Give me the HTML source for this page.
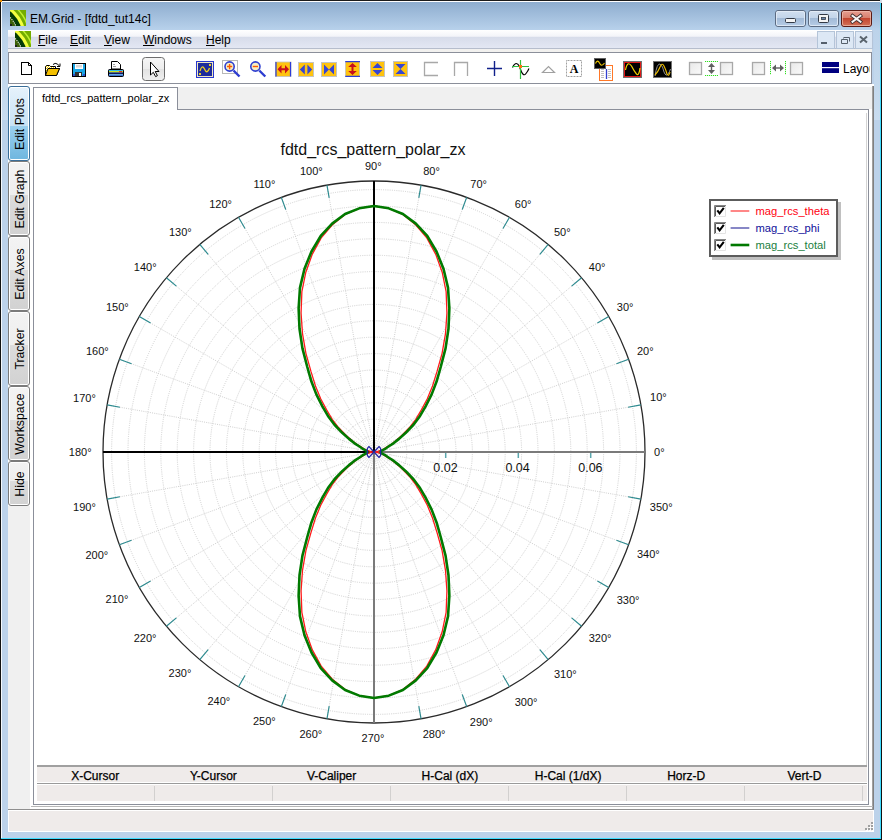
<!DOCTYPE html>
<html><head><meta charset="utf-8">
<style>
*{box-sizing:border-box;margin:0;padding:0}
html,body{width:882px;height:840px;overflow:hidden;background:#bcd2ea;font-family:"Liberation Sans",sans-serif;color:#000}
.a{position:absolute}
.lbl{position:absolute;width:60px;text-align:center;font-size:11px;line-height:12px;color:#111;white-space:nowrap}
.vl{font-size:12.5px;line-height:13px}
.menu{position:absolute;top:33px;font-size:12px;line-height:14px;color:#000}
.menu u{text-decoration:underline;text-underline-offset:1px;text-decoration-thickness:1px}
.tab{position:absolute;left:8px;width:22px;border:1px solid #7b7b7b;border-radius:3px;background:linear-gradient(180deg,#f3f3f3 0,#eeeeee 45%,#dcdcdc 45%,#d2d2d2 100%);box-shadow:inset 0 0 0 1px #fff}
.tab span{position:absolute;left:50%;top:50%;transform:translate(-50%,-50%) translate(1px,0) rotate(-90deg);font-size:12.3px;line-height:12px;white-space:nowrap}
.hdr{position:absolute;top:770px;font-size:12px;line-height:12px;text-align:center;width:118px;-webkit-text-stroke:0.25px #000}
</style></head><body>

<div class="a" style="left:0;top:0;width:882px;height:1px;background:#1b1b1b"></div>
<div class="a" style="left:0;top:0;width:1px;height:840px;background:#111"></div>
<div class="a" style="left:881px;top:0;width:1px;height:840px;background:#111"></div>
<div class="a" style="left:0;top:839px;width:882px;height:1px;background:#111"></div>
<div class="a" style="left:880px;top:1px;width:1px;height:838px;background:#3fdcff"></div>
<div class="a" style="left:1px;top:838px;width:880px;height:1px;background:#3fdcff"></div>
<div class="a" style="left:1px;top:1px;width:879px;height:1px;background:#fff"></div>
<div class="a" style="left:1px;top:1px;width:1px;height:837px;background:#f4f8fc"></div>
<div class="a" style="left:2px;top:2px;width:878px;height:28px;background:linear-gradient(#8eadcf,#b8d1eb)"></div>
<div class="a" style="left:2px;top:30px;width:6px;height:90px;background:linear-gradient(#bcd3ea,#c9dcef)"></div>
<div class="a" style="left:874px;top:30px;width:6px;height:90px;background:linear-gradient(#bcd3ea,#c9dcef)"></div>

<div class="a" style="left:30px;top:11px;font-size:12px;line-height:16px;color:#000">EM.Grid - [fdtd_tut14c]</div>
<div class="a" style="left:8px;top:30px;width:864px;height:18px;background:linear-gradient(#ffffff 0,#f3f4f9 35%,#d7dcea 40%,#e3e7f3 100%)"></div>
<div class="a" style="left:8px;top:48px;width:864px;height:1px;background:#b6bdcc"></div>
<div class="a" style="left:8px;top:49px;width:864px;height:3px;background:#f2f1ef"></div>

<div class="menu" style="left:38px"><u>F</u>ile</div><div class="menu" style="left:70px"><u>E</u>dit</div><div class="menu" style="left:104px"><u>V</u>iew</div><div class="menu" style="left:143px"><u>W</u>indows</div><div class="menu" style="left:206px"><u>H</u>elp</div>
<div class="a" style="left:8px;top:52px;width:864px;height:32px;border:1px solid #8b8f9a;background:#fff"></div>
<div class="a" style="left:8px;top:84px;width:866px;height:726px;background:#fff"></div>
<div class="a" style="left:8px;top:506px;width:22px;height:303px;background:#f0f0f0"></div>

<div class="tab" style="top:86px;height:75px;border-color:#3a6e99;background:linear-gradient(180deg,#e6f2fb 0,#c8e2f5 53%,#9bd0ef 53%,#6fb6df 100%)"><span>Edit Plots</span></div>
<div class="tab" style="top:161px;height:75px"><span>Edit Graph</span></div>
<div class="tab" style="top:236px;height:75px"><span>Edit Axes</span></div>
<div class="tab" style="top:311px;height:75px"><span>Tracker</span></div>
<div class="tab" style="top:386px;height:75px"><span>Workspace</span></div>
<div class="tab" style="top:461px;height:45px"><span>Hide</span></div>
<div class="a" style="left:33px;top:87px;width:145px;height:23px;border:1px solid #8b8f9a;border-bottom:none;background:#fff"></div>
<div class="a" style="left:42px;top:92px;font-size:11px;line-height:13px">fdtd_rcs_pattern_polar_zx</div>
<div class="a" style="left:178px;top:87px;width:694px;height:22px;background:#f0f0f0"></div>
<div class="a" style="left:177px;top:109px;width:692px;height:1px;background:#8b8f9a"></div>
<div class="a" style="left:33px;top:109px;width:1px;height:696px;background:#8b8f9a"></div>
<div class="a" style="left:868px;top:109px;width:1px;height:696px;background:#8b8f9a"></div>
<div class="a" style="left:33px;top:804px;width:836px;height:1px;background:#8b8f9a"></div>
<div class="a" style="left:866px;top:113px;width:1px;height:652px;background:#d4d4d4"></div>
<div class="a" style="left:872px;top:86px;width:2px;height:724px;background:linear-gradient(90deg,#b0b0b0,#707070)"></div>
<div class="a" style="left:31px;top:806px;width:842px;height:1px;background:#b8b8b8"></div>
<div class="a" style="left:8px;top:809px;width:866px;height:1px;background:#8f8f8f"></div>

<div class="a" style="left:37px;top:765px;width:830px;height:2px;background:#a0a0a0"></div>
<div class="a" style="left:37px;top:767px;width:830px;height:15px;background:#efebea"></div>
<div class="a" style="left:37px;top:783px;width:830px;height:1px;background:#9a9a9a"></div>
<div class="a" style="left:37px;top:785px;width:830px;height:16px;background:#efebea"></div>

<div class="hdr" style="left:36.2px">X-Cursor</div>
<div class="a" style="left:154px;top:786px;width:1px;height:15px;background:#d2d0cf"></div>
<div class="hdr" style="left:154.4px">Y-Cursor</div>
<div class="a" style="left:272px;top:786px;width:1px;height:15px;background:#d2d0cf"></div>
<div class="hdr" style="left:272.6px">V-Caliper</div>
<div class="a" style="left:390px;top:786px;width:1px;height:15px;background:#d2d0cf"></div>
<div class="hdr" style="left:390.9px">H-Cal (dX)</div>
<div class="a" style="left:508px;top:786px;width:1px;height:15px;background:#d2d0cf"></div>
<div class="hdr" style="left:509.1px">H-Cal (1/dX)</div>
<div class="a" style="left:626px;top:786px;width:1px;height:15px;background:#d2d0cf"></div>
<div class="hdr" style="left:627.2px">Horz-D</div>
<div class="a" style="left:744px;top:786px;width:1px;height:15px;background:#d2d0cf"></div>
<div class="hdr" style="left:745.5px">Vert-D</div>
<div class="a" style="left:862px;top:786px;width:1px;height:15px;background:#d2d0cf"></div>
<div class="a" style="left:8px;top:810px;width:866px;height:22px;background:#efebea;border:1px solid #fff"></div>
<svg class="a" style="left:0;top:0" width="882" height="840" viewBox="0 0 882 840">
<circle cx="374.0" cy="452.0" r="16.40" fill="none" stroke="#d0d0d0" stroke-width="1" stroke-dasharray="1 1.2"/>
<circle cx="374.0" cy="452.0" r="32.80" fill="none" stroke="#d0d0d0" stroke-width="1" stroke-dasharray="1 1.2"/>
<circle cx="374.0" cy="452.0" r="49.20" fill="none" stroke="#d0d0d0" stroke-width="1" stroke-dasharray="1 1.2"/>
<circle cx="374.0" cy="452.0" r="65.60" fill="none" stroke="#d0d0d0" stroke-width="1" stroke-dasharray="1 1.2"/>
<circle cx="374.0" cy="452.0" r="82.00" fill="none" stroke="#d0d0d0" stroke-width="1" stroke-dasharray="1 1.2"/>
<circle cx="374.0" cy="452.0" r="98.40" fill="none" stroke="#d0d0d0" stroke-width="1" stroke-dasharray="1 1.2"/>
<circle cx="374.0" cy="452.0" r="114.80" fill="none" stroke="#d0d0d0" stroke-width="1" stroke-dasharray="1 1.2"/>
<circle cx="374.0" cy="452.0" r="131.20" fill="none" stroke="#d0d0d0" stroke-width="1" stroke-dasharray="1 1.2"/>
<circle cx="374.0" cy="452.0" r="147.60" fill="none" stroke="#d0d0d0" stroke-width="1" stroke-dasharray="1 1.2"/>
<circle cx="374.0" cy="452.0" r="164.00" fill="none" stroke="#d0d0d0" stroke-width="1" stroke-dasharray="1 1.2"/>
<circle cx="374.0" cy="452.0" r="180.40" fill="none" stroke="#d0d0d0" stroke-width="1" stroke-dasharray="1 1.2"/>
<circle cx="374.0" cy="452.0" r="196.80" fill="none" stroke="#d0d0d0" stroke-width="1" stroke-dasharray="1 1.2"/>
<circle cx="374.0" cy="452.0" r="213.20" fill="none" stroke="#d0d0d0" stroke-width="1" stroke-dasharray="1 1.2"/>
<circle cx="374.0" cy="452.0" r="229.60" fill="none" stroke="#d0d0d0" stroke-width="1" stroke-dasharray="1 1.2"/>
<circle cx="374.0" cy="452.0" r="246.00" fill="none" stroke="#d0d0d0" stroke-width="1" stroke-dasharray="1 1.2"/>
<circle cx="374.0" cy="452.0" r="262.40" fill="none" stroke="#d0d0d0" stroke-width="1" stroke-dasharray="1 1.2"/>
<line x1="374.0" y1="452.0" x2="640.88" y2="404.94" stroke="#d0d0d0" stroke-width="1" stroke-dasharray="1 1.2"/>
<line x1="374.0" y1="452.0" x2="628.66" y2="359.31" stroke="#d0d0d0" stroke-width="1" stroke-dasharray="1 1.2"/>
<line x1="374.0" y1="452.0" x2="608.69" y2="316.50" stroke="#d0d0d0" stroke-width="1" stroke-dasharray="1 1.2"/>
<line x1="374.0" y1="452.0" x2="581.60" y2="277.80" stroke="#d0d0d0" stroke-width="1" stroke-dasharray="1 1.2"/>
<line x1="374.0" y1="452.0" x2="548.20" y2="244.40" stroke="#d0d0d0" stroke-width="1" stroke-dasharray="1 1.2"/>
<line x1="374.0" y1="452.0" x2="509.50" y2="217.31" stroke="#d0d0d0" stroke-width="1" stroke-dasharray="1 1.2"/>
<line x1="374.0" y1="452.0" x2="466.69" y2="197.34" stroke="#d0d0d0" stroke-width="1" stroke-dasharray="1 1.2"/>
<line x1="374.0" y1="452.0" x2="421.06" y2="185.12" stroke="#d0d0d0" stroke-width="1" stroke-dasharray="1 1.2"/>
<line x1="374.0" y1="452.0" x2="326.94" y2="185.12" stroke="#d0d0d0" stroke-width="1" stroke-dasharray="1 1.2"/>
<line x1="374.0" y1="452.0" x2="281.31" y2="197.34" stroke="#d0d0d0" stroke-width="1" stroke-dasharray="1 1.2"/>
<line x1="374.0" y1="452.0" x2="238.50" y2="217.31" stroke="#d0d0d0" stroke-width="1" stroke-dasharray="1 1.2"/>
<line x1="374.0" y1="452.0" x2="199.80" y2="244.40" stroke="#d0d0d0" stroke-width="1" stroke-dasharray="1 1.2"/>
<line x1="374.0" y1="452.0" x2="166.40" y2="277.80" stroke="#d0d0d0" stroke-width="1" stroke-dasharray="1 1.2"/>
<line x1="374.0" y1="452.0" x2="139.31" y2="316.50" stroke="#d0d0d0" stroke-width="1" stroke-dasharray="1 1.2"/>
<line x1="374.0" y1="452.0" x2="119.34" y2="359.31" stroke="#d0d0d0" stroke-width="1" stroke-dasharray="1 1.2"/>
<line x1="374.0" y1="452.0" x2="107.12" y2="404.94" stroke="#d0d0d0" stroke-width="1" stroke-dasharray="1 1.2"/>
<line x1="374.0" y1="452.0" x2="107.12" y2="499.06" stroke="#d0d0d0" stroke-width="1" stroke-dasharray="1 1.2"/>
<line x1="374.0" y1="452.0" x2="119.34" y2="544.69" stroke="#d0d0d0" stroke-width="1" stroke-dasharray="1 1.2"/>
<line x1="374.0" y1="452.0" x2="139.31" y2="587.50" stroke="#d0d0d0" stroke-width="1" stroke-dasharray="1 1.2"/>
<line x1="374.0" y1="452.0" x2="166.40" y2="626.20" stroke="#d0d0d0" stroke-width="1" stroke-dasharray="1 1.2"/>
<line x1="374.0" y1="452.0" x2="199.80" y2="659.60" stroke="#d0d0d0" stroke-width="1" stroke-dasharray="1 1.2"/>
<line x1="374.0" y1="452.0" x2="238.50" y2="686.69" stroke="#d0d0d0" stroke-width="1" stroke-dasharray="1 1.2"/>
<line x1="374.0" y1="452.0" x2="281.31" y2="706.66" stroke="#d0d0d0" stroke-width="1" stroke-dasharray="1 1.2"/>
<line x1="374.0" y1="452.0" x2="326.94" y2="718.88" stroke="#d0d0d0" stroke-width="1" stroke-dasharray="1 1.2"/>
<line x1="374.0" y1="452.0" x2="421.06" y2="718.88" stroke="#d0d0d0" stroke-width="1" stroke-dasharray="1 1.2"/>
<line x1="374.0" y1="452.0" x2="466.69" y2="706.66" stroke="#d0d0d0" stroke-width="1" stroke-dasharray="1 1.2"/>
<line x1="374.0" y1="452.0" x2="509.50" y2="686.69" stroke="#d0d0d0" stroke-width="1" stroke-dasharray="1 1.2"/>
<line x1="374.0" y1="452.0" x2="548.20" y2="659.60" stroke="#d0d0d0" stroke-width="1" stroke-dasharray="1 1.2"/>
<line x1="374.0" y1="452.0" x2="581.60" y2="626.20" stroke="#d0d0d0" stroke-width="1" stroke-dasharray="1 1.2"/>
<line x1="374.0" y1="452.0" x2="608.69" y2="587.50" stroke="#d0d0d0" stroke-width="1" stroke-dasharray="1 1.2"/>
<line x1="374.0" y1="452.0" x2="628.66" y2="544.69" stroke="#d0d0d0" stroke-width="1" stroke-dasharray="1 1.2"/>
<line x1="374.0" y1="452.0" x2="640.88" y2="499.06" stroke="#d0d0d0" stroke-width="1" stroke-dasharray="1 1.2"/>
<circle cx="374.0" cy="452.0" r="271.0" fill="none" stroke="#2a2a2a" stroke-width="1.3"/>
<line x1="628.08" y1="407.20" x2="640.88" y2="404.94" stroke="#2b8a8f" stroke-width="1.15"/>
<line x1="616.44" y1="363.76" x2="628.66" y2="359.31" stroke="#2b8a8f" stroke-width="1.15"/>
<line x1="597.43" y1="323.00" x2="608.69" y2="316.50" stroke="#2b8a8f" stroke-width="1.15"/>
<line x1="571.64" y1="286.16" x2="581.60" y2="277.80" stroke="#2b8a8f" stroke-width="1.15"/>
<line x1="539.84" y1="254.36" x2="548.20" y2="244.40" stroke="#2b8a8f" stroke-width="1.15"/>
<line x1="503.00" y1="228.57" x2="509.50" y2="217.31" stroke="#2b8a8f" stroke-width="1.15"/>
<line x1="462.24" y1="209.56" x2="466.69" y2="197.34" stroke="#2b8a8f" stroke-width="1.15"/>
<line x1="418.80" y1="197.92" x2="421.06" y2="185.12" stroke="#2b8a8f" stroke-width="1.15"/>
<line x1="329.20" y1="197.92" x2="326.94" y2="185.12" stroke="#2b8a8f" stroke-width="1.15"/>
<line x1="285.76" y1="209.56" x2="281.31" y2="197.34" stroke="#2b8a8f" stroke-width="1.15"/>
<line x1="245.00" y1="228.57" x2="238.50" y2="217.31" stroke="#2b8a8f" stroke-width="1.15"/>
<line x1="208.16" y1="254.36" x2="199.80" y2="244.40" stroke="#2b8a8f" stroke-width="1.15"/>
<line x1="176.36" y1="286.16" x2="166.40" y2="277.80" stroke="#2b8a8f" stroke-width="1.15"/>
<line x1="150.57" y1="323.00" x2="139.31" y2="316.50" stroke="#2b8a8f" stroke-width="1.15"/>
<line x1="131.56" y1="363.76" x2="119.34" y2="359.31" stroke="#2b8a8f" stroke-width="1.15"/>
<line x1="119.92" y1="407.20" x2="107.12" y2="404.94" stroke="#2b8a8f" stroke-width="1.15"/>
<line x1="119.92" y1="496.80" x2="107.12" y2="499.06" stroke="#2b8a8f" stroke-width="1.15"/>
<line x1="131.56" y1="540.24" x2="119.34" y2="544.69" stroke="#2b8a8f" stroke-width="1.15"/>
<line x1="150.57" y1="581.00" x2="139.31" y2="587.50" stroke="#2b8a8f" stroke-width="1.15"/>
<line x1="176.36" y1="617.84" x2="166.40" y2="626.20" stroke="#2b8a8f" stroke-width="1.15"/>
<line x1="208.16" y1="649.64" x2="199.80" y2="659.60" stroke="#2b8a8f" stroke-width="1.15"/>
<line x1="245.00" y1="675.43" x2="238.50" y2="686.69" stroke="#2b8a8f" stroke-width="1.15"/>
<line x1="285.76" y1="694.44" x2="281.31" y2="706.66" stroke="#2b8a8f" stroke-width="1.15"/>
<line x1="329.20" y1="706.08" x2="326.94" y2="718.88" stroke="#2b8a8f" stroke-width="1.15"/>
<line x1="418.80" y1="706.08" x2="421.06" y2="718.88" stroke="#2b8a8f" stroke-width="1.15"/>
<line x1="462.24" y1="694.44" x2="466.69" y2="706.66" stroke="#2b8a8f" stroke-width="1.15"/>
<line x1="503.00" y1="675.43" x2="509.50" y2="686.69" stroke="#2b8a8f" stroke-width="1.15"/>
<line x1="539.84" y1="649.64" x2="548.20" y2="659.60" stroke="#2b8a8f" stroke-width="1.15"/>
<line x1="571.64" y1="617.84" x2="581.60" y2="626.20" stroke="#2b8a8f" stroke-width="1.15"/>
<line x1="597.43" y1="581.00" x2="608.69" y2="587.50" stroke="#2b8a8f" stroke-width="1.15"/>
<line x1="616.44" y1="540.24" x2="628.66" y2="544.69" stroke="#2b8a8f" stroke-width="1.15"/>
<line x1="628.08" y1="496.80" x2="640.88" y2="499.06" stroke="#2b8a8f" stroke-width="1.15"/>
<line x1="374.0" y1="452.0" x2="374.0" y2="181.0" stroke="#000" stroke-width="2"/>
<line x1="374.0" y1="452.0" x2="103.0" y2="452.0" stroke="#000" stroke-width="2"/>
<line x1="374.0" y1="452.0" x2="645.0" y2="452.0" stroke="#7a7a7a" stroke-width="2"/>
<line x1="374.0" y1="452.0" x2="374.0" y2="723.0" stroke="#7a7a7a" stroke-width="2"/>
<line x1="445.7" y1="453" x2="445.7" y2="458" stroke="#5aa6ad" stroke-width="1.5"/>
<line x1="518.3" y1="453" x2="518.3" y2="458" stroke="#5aa6ad" stroke-width="1.5"/>
<line x1="590.7" y1="453" x2="590.7" y2="458" stroke="#5aa6ad" stroke-width="1.5"/>
<path d="M374.00,206.00 L359.27,208.47 L345.16,214.45 L332.35,224.72 L321.21,237.83 L312.34,254.12 L305.82,272.24 L301.87,291.74 L301.07,313.04 L302.50,333.72 L305.91,353.36 L311.03,371.63 L315.48,385.95 L320.68,398.68 L326.76,410.15 L332.25,419.29 L338.53,427.52 L345.73,434.91 L351.93,440.41 L356.69,444.21 L361.71,447.34 L364.25,448.96 L366.84,450.23 L369.49,451.17 L371.07,451.64 L372.53,451.91 L374.00,452.00 L372.53,452.09 L371.07,452.36 L369.49,452.83 L366.84,453.77 L364.25,455.04 L361.71,456.66 L356.69,459.79 L351.93,463.59 L345.73,469.09 L338.53,476.48 L332.25,484.71 L326.76,493.85 L320.68,505.32 L315.48,518.05 L311.03,532.37 L305.91,550.64 L302.50,570.28 L301.07,590.96 L301.87,612.26 L305.82,631.76 L312.34,649.88 L321.21,666.17 L332.35,679.28 L345.16,689.55 L359.27,695.53 L374.00,698.00 L388.73,695.53 L402.84,689.55 L415.65,679.28 L426.79,666.17 L435.66,649.88 L442.18,631.76 L446.13,612.26 L446.93,590.96 L445.50,570.28 L442.09,550.64 L436.97,532.37 L432.52,518.05 L427.32,505.32 L421.24,493.85 L415.75,484.71 L409.47,476.48 L402.27,469.09 L396.07,463.59 L391.31,459.79 L386.29,456.66 L383.75,455.04 L381.16,453.77 L378.51,452.83 L376.93,452.36 L375.47,452.09 L374.00,452.00 L375.47,451.91 L376.93,451.64 L378.51,451.17 L381.16,450.23 L383.75,448.96 L386.29,447.34 L391.31,444.21 L396.07,440.41 L402.27,434.91 L409.47,427.52 L415.75,419.29 L421.24,410.15 L427.32,398.68 L432.52,385.95 L436.97,371.63 L442.09,353.36 L445.50,333.72 L446.93,313.04 L446.13,291.74 L442.18,272.24 L435.66,254.12 L426.79,237.83 L415.65,224.72 L402.84,214.45 L388.73,208.47 L374.00,206.00 Z" fill="none" stroke="#ff1a1a" stroke-width="1.3"/>
<path d="M374.00,206.00 L359.26,208.34 L345.09,213.93 L332.15,223.61 L320.75,235.97 L311.51,251.46 L304.51,268.78 L300.00,287.58 L298.63,308.39 L299.51,328.77 L302.45,348.34 L307.22,366.76 L311.35,381.28 L316.35,394.35 L322.42,406.31 L327.97,415.94 L334.52,424.75 L342.24,432.80 L348.98,438.87 L354.22,443.10 L359.52,446.51 L361.99,448.26 L364.31,449.61 L366.24,450.58 L366.98,451.15 L367.29,451.59 L367.20,452.00 L367.29,452.41 L366.98,452.85 L366.24,453.42 L364.31,454.39 L361.99,455.74 L359.52,457.49 L354.22,460.90 L348.98,465.13 L342.24,471.20 L334.52,479.25 L327.97,488.06 L322.42,497.69 L316.35,509.65 L311.35,522.72 L307.22,537.24 L302.45,555.66 L299.51,575.23 L298.63,595.61 L300.00,616.42 L304.51,635.22 L311.51,652.54 L320.75,668.03 L332.15,680.39 L345.09,690.07 L359.26,695.66 L374.00,698.00 L388.74,695.66 L402.91,690.07 L415.85,680.39 L427.25,668.03 L436.49,652.54 L443.49,635.22 L448.00,616.42 L449.37,595.61 L448.49,575.23 L445.55,555.66 L440.78,537.24 L436.65,522.72 L431.65,509.65 L425.58,497.69 L420.03,488.06 L413.48,479.25 L405.76,471.20 L399.02,465.13 L393.78,460.90 L388.48,457.49 L386.01,455.74 L383.69,454.39 L381.76,453.42 L381.02,452.85 L380.71,452.41 L380.80,452.00 L380.71,451.59 L381.02,451.15 L381.76,450.58 L383.69,449.61 L386.01,448.26 L388.48,446.51 L393.78,443.10 L399.02,438.87 L405.76,432.80 L413.48,424.75 L420.03,415.94 L425.58,406.31 L431.65,394.35 L436.65,381.28 L440.78,366.76 L445.55,348.34 L448.49,328.77 L449.37,308.39 L448.00,287.58 L443.49,268.78 L436.49,251.46 L427.25,235.97 L415.85,223.61 L402.91,213.93 L388.74,208.34 L374.00,206.00 Z" fill="none" stroke="#007a00" stroke-width="2.6" stroke-linejoin="round"/>
<path d="M374.0,452.0 L369,446.6 Q366.2,449 367.6,452 Q366.2,455 369,457.4 Z M374.0,452.0 L379,446.6 Q381.8,449 380.4,452 Q381.8,455 379,457.4 Z" fill="none" stroke="#2424a8" stroke-width="1.3"/>
</svg>
<div class="a" style="left:280.5px;top:141px;font-size:16px;line-height:18px;color:#111">fdtd_rcs_pattern_polar_zx</div>
<div class="lbl" style="left:629.3px;top:446.1px">0&deg;</div>
<div class="lbl" style="left:628.4px;top:391.4px">10&deg;</div>
<div class="lbl" style="left:615.3px;top:345.0px">20&deg;</div>
<div class="lbl" style="left:595.1px;top:300.6px">30&deg;</div>
<div class="lbl" style="left:567.1px;top:261.2px">40&deg;</div>
<div class="lbl" style="left:532.3px;top:225.8px">50&deg;</div>
<div class="lbl" style="left:493.2px;top:197.8px">60&deg;</div>
<div class="lbl" style="left:448.6px;top:177.6px">70&deg;</div>
<div class="lbl" style="left:401.5px;top:165.0px">80&deg;</div>
<div class="lbl" style="left:343.3px;top:160.4px">90&deg;</div>
<div class="lbl" style="left:281.4px;top:165.0px">100&deg;</div>
<div class="lbl" style="left:234.4px;top:178.0px">110&deg;</div>
<div class="lbl" style="left:190.6px;top:197.6px">120&deg;</div>
<div class="lbl" style="left:150.3px;top:225.6px">130&deg;</div>
<div class="lbl" style="left:115.2px;top:261.0px">140&deg;</div>
<div class="lbl" style="left:87.3px;top:300.6px">150&deg;</div>
<div class="lbl" style="left:67.4px;top:344.6px">160&deg;</div>
<div class="lbl" style="left:54.5px;top:391.5px">170&deg;</div>
<div class="lbl" style="left:50.2px;top:446.2px">180&deg;</div>
<div class="lbl" style="left:54.5px;top:501.4px">190&deg;</div>
<div class="lbl" style="left:66.8px;top:548.5px">200&deg;</div>
<div class="lbl" style="left:87.0px;top:593.2px">210&deg;</div>
<div class="lbl" style="left:115.1px;top:632.3px">220&deg;</div>
<div class="lbl" style="left:150.0px;top:667.1px">230&deg;</div>
<div class="lbl" style="left:188.9px;top:695.3px">240&deg;</div>
<div class="lbl" style="left:234.3px;top:715.1px">250&deg;</div>
<div class="lbl" style="left:280.8px;top:728.4px">260&deg;</div>
<div class="lbl" style="left:343.0px;top:732.2px">270&deg;</div>
<div class="lbl" style="left:404.1px;top:728.4px">280&deg;</div>
<div class="lbl" style="left:451.2px;top:716.0px">290&deg;</div>
<div class="lbl" style="left:496.1px;top:695.6px">300&deg;</div>
<div class="lbl" style="left:535.3px;top:667.8px">310&deg;</div>
<div class="lbl" style="left:570.1px;top:632.4px">320&deg;</div>
<div class="lbl" style="left:598.1px;top:593.5px">330&deg;</div>
<div class="lbl" style="left:618.3px;top:548.1px">340&deg;</div>
<div class="lbl" style="left:631.2px;top:501.3px">350&deg;</div>
<div class="lbl vl" style="left:415.5px;top:461.9px">0.02</div>
<div class="lbl vl" style="left:487.6px;top:461.9px">0.04</div>
<div class="lbl vl" style="left:560.4px;top:461.9px">0.06</div>
<svg class="a" style="left:0;top:0" width="882" height="90" viewBox="0 0 882 90">
<defs>
<linearGradient id="leaf" x1="0" y1="1" x2="1" y2="0"><stop offset="0" stop-color="#0a3a08"/><stop offset="0.45" stop-color="#0b6a10"/><stop offset="0.62" stop-color="#f4ff3a"/><stop offset="0.78" stop-color="#9ad81a"/><stop offset="1" stop-color="#5ca610"/></linearGradient>
<pattern id="dith" width="2" height="2" patternUnits="userSpaceOnUse"><rect width="2" height="2" fill="#fff"/><rect width="1" height="1" fill="#f0c800"/><rect x="1" y="1" width="1" height="1" fill="#f0c800"/></pattern>
<linearGradient id="btnb" x1="0" y1="0" x2="0" y2="1"><stop offset="0" stop-color="#d2e0f0"/><stop offset="0.45" stop-color="#c3d5ea"/><stop offset="0.46" stop-color="#a1b9d6"/><stop offset="1" stop-color="#b7cde6"/></linearGradient>
<linearGradient id="btnr" x1="0" y1="0" x2="0" y2="1"><stop offset="0" stop-color="#e8a094"/><stop offset="0.45" stop-color="#d8806e"/><stop offset="0.46" stop-color="#c2422c"/><stop offset="1" stop-color="#d4745a"/></linearGradient>
<linearGradient id="ptr" x1="0" y1="0" x2="0" y2="1"><stop offset="0" stop-color="#f6f6f6"/><stop offset="0.5" stop-color="#ededed"/><stop offset="0.51" stop-color="#e2e2e2"/><stop offset="1" stop-color="#f0f0f0"/></linearGradient>
<linearGradient id="gbox" x1="0" y1="0" x2="1" y2="1"><stop offset="0" stop-color="#e8e8e8"/><stop offset="1" stop-color="#fafafa"/></linearGradient>
</defs>
<svg x="10" y="10" width="16" height="16" viewBox="0 0 16 16" overflow="hidden">
<rect width="16" height="16" fill="#74ac00"/>
<circle cx="-18.7" cy="26.1" r="37.5" fill="none" stroke="#c0f030" stroke-width="1.5"/>
<circle cx="-18.7" cy="26.1" r="34.2" fill="#f4ff40"/>
<circle cx="-18.7" cy="26.1" r="31" fill="#053c06"/>
<circle cx="-18.7" cy="26.1" r="26.5" fill="#3c6008"/>
<circle cx="-18.7" cy="26.1" r="26.5" fill="none" stroke="#f0f0e0" stroke-width="1.1" stroke-dasharray="1.2 0.9"/>
<rect x="0" y="14" width="2" height="2" fill="#202020"/>
</svg>
<svg x="15" y="31" width="16" height="16" viewBox="0 0 16 16" overflow="hidden">
<rect width="16" height="16" fill="#74ac00"/>
<circle cx="-18.7" cy="26.1" r="37.5" fill="none" stroke="#c0f030" stroke-width="1.5"/>
<circle cx="-18.7" cy="26.1" r="34.2" fill="#f4ff40"/>
<circle cx="-18.7" cy="26.1" r="31" fill="#053c06"/>
<circle cx="-18.7" cy="26.1" r="26.5" fill="#3c6008"/>
<circle cx="-18.7" cy="26.1" r="26.5" fill="none" stroke="#f0f0e0" stroke-width="1.1" stroke-dasharray="1.2 0.9"/>
<rect x="0" y="14" width="2" height="2" fill="#202020"/>
</svg>
<rect x="775.5" y="10.5" width="30" height="16" rx="2.5" fill="url(#btnb)" stroke="#5b6b82"/>
<rect x="776.5" y="11.5" width="28" height="14" rx="1.5" fill="none" stroke="#e6eef8" stroke-opacity="0.8"/>
<rect x="785.5" y="18.5" width="10" height="4" rx="1" fill="#f4f4f4" stroke="#333a46"/>
<rect x="808.5" y="10.5" width="30" height="16" rx="2.5" fill="url(#btnb)" stroke="#5b6b82"/>
<rect x="809.5" y="11.5" width="28" height="14" rx="1.5" fill="none" stroke="#e6eef8" stroke-opacity="0.8"/>
<rect x="818.5" y="14.5" width="10" height="8" rx="1" fill="#f4f4f4" stroke="#333a46"/>
<rect x="821.5" y="17.5" width="4" height="2" fill="#6a86a8" stroke="#333a46" stroke-width="0.8"/>
<rect x="841.5" y="10.5" width="30" height="16" rx="2.5" fill="url(#btnr)" stroke="#5a1a14"/>
<rect x="842.5" y="11.5" width="28" height="14" rx="1.5" fill="none" stroke="#f0c0b0" stroke-opacity="0.7"/>
<path d="M852.5,15.8 L860.5,21.8 M860.5,15.8 L852.5,21.8" stroke="#3a2a2a" stroke-width="3.6" stroke-linecap="square"/>
<path d="M852.5,15.8 L860.5,21.8 M860.5,15.8 L852.5,21.8" stroke="#f8f4f4" stroke-width="2" stroke-linecap="square"/>
<rect x="817.5" y="31.5" width="17" height="17" fill="#dde8f5" stroke="#b4c4d8"/>
<rect x="836.5" y="31.5" width="17" height="17" fill="#dde8f5" stroke="#b4c4d8"/>
<rect x="855.5" y="31.5" width="17" height="17" fill="#dde8f5" stroke="#b4c4d8"/>
<rect x="821" y="42" width="6" height="2" fill="#55606c"/>
<path d="M841.5,39.5 h6 v4 h-6 z M843.5,37.5 h6 v4 M843.5,38.5 v1" fill="none" stroke="#55606c" stroke-width="1"/>
<path d="M860,36.5 L867,42.5 M867,36.5 L860,42.5" stroke="#5a646e" stroke-width="2"/>
<path d="M21.5,62.5 H28.5 L31.5,65.5 V74.5 H21.5 Z" fill="#fff" stroke="#000" shape-rendering="crispEdges"/>
<path d="M28.5,62.5 V65.5 H31.5" fill="none" stroke="#000"/>
<path d="M45.5,66.5 L46.5,65.5 H49.5 L50.5,66.5 H55.5 V68.5 H59.5 L56.5,75.5 H45.5 Z" fill="url(#dith)" stroke="#000"/>
<path d="M48,68.5 H59.5 L56.5,75.5 H45.5 Z" fill="#f4c000" stroke="#000"/>
<path d="M53,64.5 Q55,62.5 57.5,64 L59,65.8" fill="none" stroke="#000" stroke-width="1"/>
<path d="M57,66.5 H60 V63.5" fill="none" stroke="#000" stroke-width="1"/>
<rect x="72.5" y="63.5" width="13" height="13" fill="#1aa6e6" stroke="#000"/>
<rect x="75" y="64" width="8" height="5" fill="#fff"/><rect x="76" y="65" width="6" height="2.5" fill="#d8d8d8"/>
<rect x="75" y="72" width="7" height="4" fill="#333"/><rect x="79" y="73" width="2" height="3" fill="#fff"/>
<rect x="73" y="74" width="2" height="2" fill="#3050d0"/><rect x="83" y="74" width="2" height="2" fill="#3050d0"/>
<path d="M111.5,61.5 H117.5 L120.5,64.5 V69 H111.5 Z" fill="#fff" stroke="#000"/>
<path d="M113,64.5 h2 M113,66.5 h3" stroke="#888" stroke-width="0.8"/>
<rect x="108.5" y="69.5" width="15" height="7" rx="1" fill="#1c3cb0" stroke="#000"/>
<rect x="109" y="70" width="14" height="2" fill="#2cb8e8"/><rect x="109" y="71" width="14" height="1.3" fill="#c8e020"/><rect x="119" y="71" width="3" height="1.3" fill="#e03020"/>
<rect x="109" y="73" width="14" height="1" fill="#101860"/><rect x="109" y="74" width="14" height="1.5" fill="#60a8e8"/>
<rect x="142.5" y="57.5" width="22" height="23" rx="3" fill="url(#ptr)" stroke="#6d6d6d"/>
<path d="M150.5,62 V75 L153.3,72.3 L155.6,76.6 L157.4,75.7 L155.2,71.5 L159,71.5 Z" fill="#fff" stroke="#000" stroke-width="1" stroke-linejoin="miter"/>
<rect x="196.5" y="61.5" width="17" height="16" fill="#f0e8c0" stroke="#2838d0"/>
<rect x="198" y="63" width="14" height="13" fill="#1e2c9c"/>
<path d="M200,71 Q202,64 204.5,69 Q207,75 209.5,68" fill="none" stroke="#f0d020" stroke-width="1.3"/>
<rect x="209" y="64" width="2" height="2" fill="#f0d020"/><rect x="199" y="73" width="2" height="2" fill="#f0d020"/>
<rect x="222.5" y="60.5" width="15" height="13" fill="none" stroke="#b8b8b8"/>
<path d="M233.5,70.5 L239.5,76.5" stroke="#2c3cd0" stroke-width="2.4"/>
<circle cx="229.6" cy="66.5" r="4.6" fill="#f6eec4" stroke="#3040d0" stroke-width="1.6"/>
<path d="M227,66.5 h5.2 M229.6,64 v5.2" stroke="#ff5a00" stroke-width="1.4"/>
<path d="M259.3,70.5 L265.3,76.5" stroke="#2c3cd0" stroke-width="2.4"/>
<circle cx="255.4" cy="66.5" r="4.6" fill="#f6eec4" stroke="#3040d0" stroke-width="1.6"/>
<path d="M252.8,66.5 h5.2" stroke="#ff5a00" stroke-width="1.4"/>
<rect x="275.5" y="62" width="15.5" height="14.5" fill="#ffc30e" stroke="#c0c0c0" stroke-width="0.8"/>
<path d="M276,62 V76.5 M290.5,62 V76.5" stroke="#2c3cd8" stroke-width="1.2"/>
<path d="M277.5,69.3 L281.5,65 V68.3 H285 V65 L289,69.3 L285,73.6 V70.3 H281.5 V73.6 Z" fill="#c8101a"/>
<rect x="298.5" y="62.5" width="15" height="14" fill="#ffc30e" stroke="#c4c4c4"/>
<path d="M299.8,69.6 L304.8,64.6 V74.6 Z M312.2,69.6 L307.4,64.6 V74.6 Z" fill="#3646d4"/>
<rect x="321.5" y="62.5" width="15" height="14" fill="#ffc30e" stroke="#c4c4c4"/>
<path d="M324,64.6 L329,69.6 L324,74.6 Z M334,64.6 L329,69.6 L334,74.6 Z" fill="#3646d4"/>
<rect x="345.5" y="61.5" width="14" height="15" fill="#ffc30e" stroke="#c0c0c0" stroke-width="0.8"/>
<path d="M345.3,61.6 H360 M345.3,76.4 H360" stroke="#2c3cd8" stroke-width="1.2"/>
<path d="M352.5,63 L356.8,67 H353.5 V71 H356.8 L352.5,75 L348.2,71 H351.5 V67 H348.2 Z" fill="#c8101a"/>
<rect x="370.5" y="61.5" width="14" height="15" fill="#ffc30e" stroke="#c4c4c4"/>
<path d="M377.5,63 L382.5,68 H372.5 Z M377.5,75 L382.5,70 H372.5 Z" fill="#3646d4"/>
<rect x="393.5" y="61.5" width="14" height="15" fill="#ffc30e" stroke="#c4c4c4"/>
<path d="M395.5,64 H405.5 L400.5,69 Z M395.5,74 H405.5 L400.5,69 Z" fill="#3646d4"/>
<path d="M438,62.5 H424.5 V75.5 H438" fill="none" stroke="#a8a8a8" stroke-width="1.3"/>
<path d="M454.5,76 V62.5 H467.5 V76" fill="none" stroke="#a8a8a8" stroke-width="1.3"/>
<path d="M494.5,61 V76 M487,68.5 H502" stroke="#10208a" stroke-width="1.4"/>
<path d="M512.5,67.5 Q516,60 519.5,66.5 Q523,78 526,73.5 Q528,71 529,68.5" fill="none" stroke="#000" stroke-width="1.2"/>
<path d="M520.5,60 V79 M512,66.5 H529" stroke="#30c040" stroke-width="1.2"/>
<rect x="519" y="65" width="3" height="3" fill="#ff7010"/>
<path d="M542.5,72.5 L548.5,66.5 L554.5,72.5 Z" fill="none" stroke="#a0a0a0" stroke-width="1.2"/>
<rect x="566.5" y="60.5" width="15" height="16" fill="#fff" stroke="#a0a0a0" stroke-dasharray="1 0.5"/>
<text x="574" y="73.3" font-family="Liberation Serif" font-weight="bold" font-size="12" text-anchor="middle" fill="#000">A</text>
<rect x="599.5" y="65.5" width="13" height="15" fill="#fff" stroke="#ff7828"/>
<path d="M601,69.5 h3 M601,71.5 h3 M601,73.5 h3 M601,75.5 h3 M601,77.5 h3 M608,69.5 h3 M608,71.5 h3 M608,73.5 h3 M608,75.5 h3 M608,77.5 h3" stroke="#b0b0b0" stroke-width="0.8"/>
<path d="M606.5,69 V79" stroke="#3040d0" stroke-width="1.3"/>
<rect x="594.5" y="58.5" width="11" height="10" fill="#000" stroke="#606060"/>
<path d="M595.5,63.5 Q597.5,59 599.5,63 Q601.5,67.5 604.5,63" fill="none" stroke="#f0c800" stroke-width="1.1"/>
<rect x="623.5" y="61.5" width="18" height="16" fill="#000" stroke="#707070"/>
<rect x="624.5" y="62.5" width="16" height="14" fill="none" stroke="#e01818" stroke-width="1"/>
<path d="M625.5,70 Q627.5,60 631.5,66 Q634,71 636.5,74 Q639,76.5 640,68" fill="none" stroke="#f0d000" stroke-width="1.2"/>
<rect x="653.5" y="61.5" width="18" height="16" fill="#000" stroke="#707070"/>
<path d="M655,76 Q657,63 660,64 Q663,66 664,72 Q666,77 668,74 Q670,71 670.5,69" fill="none" stroke="#909090" stroke-width="1"/>
<path d="M655,75 Q658,72 660,67 Q662,62 664,66 Q666,70 667,74 Q669,77 670,72" fill="none" stroke="#f0c000" stroke-width="1.1"/>
<rect x="689.5" y="62.5" width="12" height="12" fill="url(#gbox)" stroke="#a8a8a8" stroke-width="1.3"/>
<rect x="720.5" y="62.5" width="12" height="12" fill="url(#gbox)" stroke="#a8a8a8" stroke-width="1.3"/>
<rect x="752.5" y="62.5" width="12" height="12" fill="url(#gbox)" stroke="#a8a8a8" stroke-width="1.3"/>
<rect x="790.5" y="62.5" width="12" height="12" fill="url(#gbox)" stroke="#a8a8a8" stroke-width="1.3"/>
<path d="M705,61.5 H718 M705,75.5 H718" stroke="#30e020" stroke-width="1" stroke-dasharray="1.2 0.8"/>
<path d="M711.5,63 L715,67 H708 Z M711.5,74 L715,70 H708 Z" fill="#606060"/><path d="M711.5,66 V71" stroke="#606060" stroke-width="1.4"/>
<path d="M770.5,61 V75 M785.5,61 V75" stroke="#30e020" stroke-width="1" stroke-dasharray="1.2 0.8"/>
<path d="M772,68 L776,64.5 V71.5 Z M784,68 L780,64.5 V71.5 Z" fill="#606060"/><path d="M775,68 H781" stroke="#606060" stroke-width="1.4"/>
<rect x="822" y="62" width="17" height="11" fill="#000080"/><rect x="822" y="67" width="17" height="1.2" fill="#fff"/>
</svg>
<div class="a" style="left:843px;top:61.5px;width:27px;overflow:hidden;font-size:12px;line-height:14px;white-space:nowrap">Layout</div>
<div class="a" style="left:712px;top:202px;width:129px;height:58px;background:#c0c0c0"></div>
<div class="a" style="left:709px;top:199px;width:129px;height:58px;background:#fff;border:2px solid #5c5c5c"></div>
<svg class="a" style="left:700px;top:195px" width="150" height="70" viewBox="700 195 150 70">
<rect x="714" y="205" width="12" height="12" fill="#fff"/>
<path d="M725.5,205 V216.5 H714" fill="none" stroke="#e4e4e4" stroke-width="1"/>
<path d="M714.5,217 V205.5 H726" fill="none" stroke="#858585" stroke-width="1"/>
<path d="M715.5,216 V206.5 H725" fill="none" stroke="#5a5a5a" stroke-width="1"/>
<path d="M717.3,210.3 L719.6,213.3 L723.8,207.8" fill="none" stroke="#000" stroke-width="2.1"/>
<path d="M730.6,211 H749.3" stroke="#ff6a6a" stroke-width="1.6"/>
<rect x="714" y="222" width="12" height="12" fill="#fff"/>
<path d="M725.5,222 V233.5 H714" fill="none" stroke="#e4e4e4" stroke-width="1"/>
<path d="M714.5,234 V222.5 H726" fill="none" stroke="#858585" stroke-width="1"/>
<path d="M715.5,233 V223.5 H725" fill="none" stroke="#5a5a5a" stroke-width="1"/>
<path d="M717.3,227.3 L719.6,230.3 L723.8,224.8" fill="none" stroke="#000" stroke-width="2.1"/>
<path d="M730.6,228 H749.3" stroke="#6a6ab8" stroke-width="1.6"/>
<rect x="714" y="239" width="12" height="12" fill="#fff"/>
<path d="M725.5,239 V250.5 H714" fill="none" stroke="#e4e4e4" stroke-width="1"/>
<path d="M714.5,251 V239.5 H726" fill="none" stroke="#858585" stroke-width="1"/>
<path d="M715.5,250 V240.5 H725" fill="none" stroke="#5a5a5a" stroke-width="1"/>
<path d="M717.3,244.3 L719.6,247.3 L723.8,241.8" fill="none" stroke="#000" stroke-width="2.1"/>
<path d="M730.6,245 H749.3" stroke="#007800" stroke-width="2.6"/>
</svg>
<div class="a" style="left:755.5px;top:205px;font-size:11.2px;line-height:13px;color:#ff0010;white-space:nowrap">mag_rcs_theta</div>
<div class="a" style="left:755.5px;top:222px;font-size:11.2px;line-height:13px;color:#10109a;white-space:nowrap">mag_rcs_phi</div>
<div class="a" style="left:755.5px;top:239px;font-size:11.2px;line-height:13px;color:#1a8040;white-space:nowrap">mag_rcs_total</div>
<svg class="a" style="left:860px;top:818px" width="16" height="16" viewBox="860 818 16 16">
<rect x="872" y="823" width="2" height="2" fill="#fff"/><rect x="871" y="822" width="2" height="2" fill="#a0a0a0"/>
<rect x="869" y="826" width="2" height="2" fill="#fff"/><rect x="868" y="825" width="2" height="2" fill="#a0a0a0"/>
<rect x="872" y="826" width="2" height="2" fill="#fff"/><rect x="871" y="825" width="2" height="2" fill="#a0a0a0"/>
<rect x="866" y="829" width="2" height="2" fill="#fff"/><rect x="865" y="828" width="2" height="2" fill="#a0a0a0"/>
<rect x="869" y="829" width="2" height="2" fill="#fff"/><rect x="868" y="828" width="2" height="2" fill="#a0a0a0"/>
<rect x="872" y="829" width="2" height="2" fill="#fff"/><rect x="871" y="828" width="2" height="2" fill="#a0a0a0"/>
</svg>
<div class="a" style="left:0;top:0;width:2px;height:2px;background:#f09000"></div><div class="a" style="left:880px;top:0;width:2px;height:3px;background:#d4dae6"></div>
</body></html>
